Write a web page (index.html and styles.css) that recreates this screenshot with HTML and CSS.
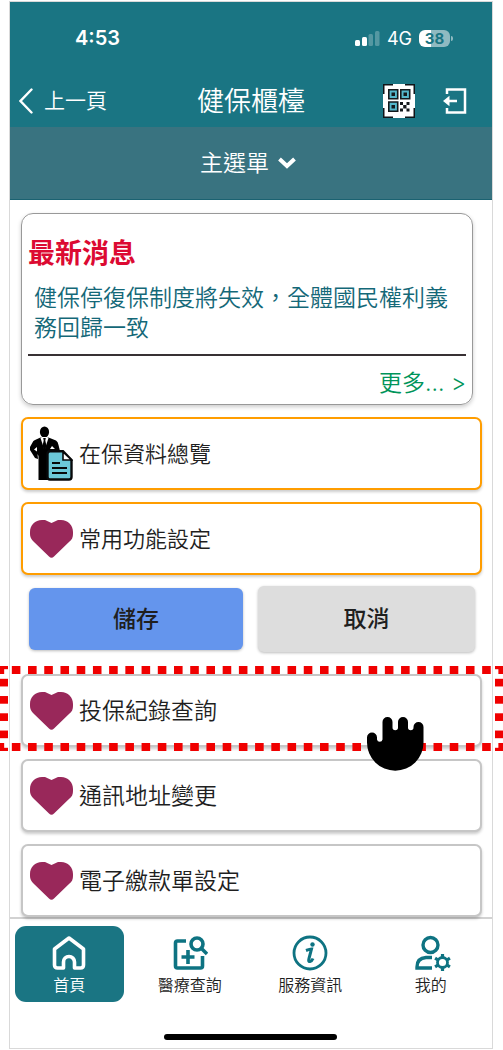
FILE: index.html
```html
<!DOCTYPE html>
<html lang="zh-Hant">
<head>
<meta charset="utf-8">
<meta name="viewport" content="width=device-width, initial-scale=1">
<title>健保櫃檯</title>
<link rel="stylesheet" href="styles.css">
</head>
<body>
<svg class="defs" aria-hidden="true">
  <symbol id="heart" viewBox="0 0 43 38">
    <path d="M12 0H15L21.500 3L28 0H31C38 0 43 5 43 12V14C43 17 42 20 39 22L24 36.500Q21.500 39 19 36.500L4 22C1 19 0 17 0 14V12C0 5 5 0 12 0Z" fill="#99285a"/>
  </symbol>
</svg>
<div class="phone">
  <div class="top">
    <div class="status">
      <span class="time">4:53</span>
      <span class="signals">
        <svg width="25" height="17" viewBox="0 0 25 17" fill="#fff" aria-hidden="true">
          <rect x="0" y="10" width="5" height="6" rx="1.500"/><rect x="7" y="7" width="5" height="9" rx="1.500"/>
          <g opacity=".25"><rect x="13.500" y="4" width="4.500" height="12" rx="1.500"/><rect x="20" y="1" width="4.500" height="15" rx="1.500"/></g>
        </svg>
        <span class="network">4G</span>
        <span class="battery">38</span>
      </span>
    </div>
    <header class="header">
      <a class="back" href="#">
        <svg width="14" height="26" viewBox="0 0 14 26" fill="none" stroke="#fff" stroke-width="2.400" stroke-linecap="round" aria-hidden="true"><path d="M12.500 1.500L1.500 13L12.500 24.500"/></svg>
        <span class="label">上一頁</span>
      </a>
      <h1 class="title">健保櫃檯</h1>
      <div class="actions">
        <button class="icon-button" type="button" aria-label="QR Code">
          <svg width="32" height="34" viewBox="0 0 32 34" aria-hidden="true">
            <path d="M0 0H32V34H0Z" fill="#fff"/>
            <path d="M.75 10V.75H10M22 .75H31.250V10M31.250 24V33.250H22M10 33.250H.75V24" fill="none" stroke="#101418" stroke-width="1.500"/>
            <g fill="#55b8cc" stroke="#14191c" stroke-width="1.600"><path d="M5.800 5.800H14.700V14.700H5.800ZM17.800 5.800H26.700V14.700H17.800ZM5.800 18H14.700V27.200H5.800Z"/></g>
            <path d="M8.500 8.500H12V12H8.500ZM20.500 8.500H24V12H20.500ZM8.500 21H12V24.500H8.500ZM17 18H20V21H17ZM23.500 18H26.500V21H23.500ZM20.200 21H23.500V24.500H20.200ZM17 24.500H20V27.500H17ZM23.500 24.500H26.500V27.500H23.500Z" fill="#14191c"/>
          </svg>
        </button>
        <button class="icon-button" type="button" aria-label="登出">
          <svg width="24" height="26" viewBox="0 0 24 26" aria-hidden="true"><path d="M4 6V1.500H22V24.500H4V20M14 13H4" fill="none" stroke="#fff" stroke-width="2.500"/><path d="M0 13L6.500 7.800V18.200Z" fill="#fff"/></svg>
        </button>
      </div>
    </header>
  </div>
  <button class="menu" type="button">
    <span class="label">主選單</span>
    <svg width="18" height="12" viewBox="0 0 18 12" fill="none" stroke="#fff" stroke-width="4" aria-hidden="true"><path d="M1.500 2L9 9L16.500 2"/></svg>
  </button>
  <main class="content">
    <section class="news">
      <h2 class="news-title">最新消息</h2>
      <a class="news-item" href="#">健保停復保制度將失效，全體國民權利義務回歸一致</a>
      <a class="more" href="#">更多... &gt;</a>
    </section>
    <button class="tile tile-main" type="button">
      <svg width="43" height="56" viewBox="0 0 43 56" aria-hidden="true">
        <ellipse cx="14.500" cy="6" rx="4.600" ry="5.600"/>
        <path d="M10.500 11.500L18.500 11.500L26 14.500Q28 15.500 28.500 19L30 25H19V54H8.500V30L7.500 28L8 33L5 32L0 24V21L2.500 16.500Q3 14.500 5 14Z"/>
        <path d="M10.500 12L14.500 24L18.500 12L17 11H12Z" fill="#fff"/>
        <path d="M13.200 12H15.800L15.300 14.500L16.500 20L14.500 25L12.500 20L13.700 14.500Z"/>
        <path d="M4 23.500L7 21V25.500ZM22 20L25 23H20Z" fill="#fff"/>
        <path d="M20 25.200H33L41.500 34V51Q41.500 53.500 39 53.500H20Q17.500 53.500 17.500 51V28Q17.500 25.200 20 25.200Z" fill="#6cc9d9" stroke="#08090a" stroke-width="2.400"/>
        <path d="M33 26V34H41.500Z" fill="#fff" stroke="#08090a" stroke-width="1.600"/>
        <path d="M22 37H30M22 42H37M22 47H37" stroke="#08090a" stroke-width="1.800"/>
      </svg>
      <span class="label">在保資料總覽</span>
    </button>
    <button class="tile tile-main" type="button">
      <svg class="heart" aria-hidden="true"><use href="#heart"/></svg>
      <span class="label">常用功能設定</span>
    </button>
    <div class="form-actions">
      <button class="action save" type="button"><span class="label">儲存</span></button>
      <button class="action cancel" type="button"><span class="label">取消</span></button>
    </div>
    <div class="highlighted">
      <button class="tile" type="button">
        <svg class="heart" aria-hidden="true"><use href="#heart"/></svg>
        <span class="label">投保紀錄查詢</span>
      </button>
      <div class="marker"></div>
      <svg class="hand" width="57" height="54" viewBox="0 0 57 54" aria-hidden="true"><path d="M0 20.500A5 5 0 0 1 10 20.500V22.500A2.800 2.800 0 0 0 15.500 22.500V5A5 5 0 0 1 25.500 5V10.500A2.700 2.700 0 0 0 31 10.500V5A5 5 0 0 1 41 5V10.500A2.700 2.700 0 0 0 46.500 10.500V10A5 5 0 0 1 56.500 10V25.500A28.250 28.250 0 0 1 0 25.500Z"/></svg>
    </div>
    <button class="tile" type="button">
      <svg class="heart" aria-hidden="true"><use href="#heart"/></svg>
      <span class="label">通訊地址變更</span>
    </button>
    <button class="tile" type="button">
      <svg class="heart" aria-hidden="true"><use href="#heart"/></svg>
      <span class="label">電子繳款單設定</span>
    </button>
  </main>
  <footer class="footer">
    <nav class="tabs">
      <a class="tab active" href="#" aria-current="page">
        <svg width="36" height="36" viewBox="0 0 36 36" fill="none" stroke="#fff" stroke-width="3.600" stroke-linejoin="round" aria-hidden="true"><path d="M3.500 14L18 3L32.500 14V30Q32.500 33 29.500 33H23.500V27A5.500 5.500 0 0 0 12.500 27V33H6.500Q3.500 33 3.500 30Z"/></svg>
        <span>首頁</span>
      </a>
      <a class="tab" href="#">
        <svg width="36" height="36" viewBox="0 0 36 36" fill="none" stroke="#0e7382" stroke-width="3.600" aria-hidden="true"><path d="M14 6H5.500Q3.500 6 3.500 8V31Q3.500 33 5.500 33H28.500Q30.500 33 30.500 31V21M16 15V29M9.500 22H22.500"/><circle cx="25" cy="9" r="6"/><path d="M29 13L35 19"/></svg>
        <span>醫療查詢</span>
      </a>
      <a class="tab" href="#">
        <svg width="36" height="36" viewBox="0 0 36 36" fill="none" stroke="#0e7382" aria-hidden="true"><circle cx="18" cy="18" r="16" stroke-width="2.800"/><circle cx="20.500" cy="9.500" r="2.200" fill="#0e7382" stroke="none"/><path d="M14 15.500Q18 14 19.500 14L17 23.500Q16 27 18 26.500Q20 26 21 23.500" stroke-width="3"/></svg>
        <span>服務資訊</span>
      </a>
      <a class="tab" href="#">
        <svg width="40" height="36" viewBox="-4 0 40 36" fill="none" stroke="#0e7382" stroke-width="3.400" aria-hidden="true"><circle cx="15.500" cy="10" r="7.500"/><path d="M17 22.500H11Q2 23 2 32V33H17"/><circle cx="27.500" cy="27.500" r="5" stroke-width="2.800"/><path d="M27.500 19V22M27.500 33V36M20.100 23.200L23 25M32 30L34.900 31.800M20.100 31.800L23 30M32 25L34.900 23.200" stroke-width="3.200"/></svg>
        <span>我的</span>
      </a>
    </nav>
    <div class="home-indicator"></div>
  </footer>
</div>
</body>
</html>
```
FILE: styles.css
```css
* {
  box-sizing: border-box;
}

body {
  margin: 0;
  background: #fff;
  color: #1f1f1f;
  font-family: "Noto Sans CJK TC", sans-serif;
  font-weight: 350;
}

button {
  margin: 0;
  padding: 0;
  border: 0;
  background: none;
  color: inherit;
  font: inherit;
  cursor: pointer;
}

a {
  color: inherit;
  text-decoration: none;
}

svg {
  display: block;
  flex: none;
}

.defs {
  position: absolute;
  width: 0;
  height: 0;
}

.label {
  display: block;
  padding-bottom: 4px;
}

.phone {
  margin: 1px 10px 0 9px;
  border: 1px solid #d9d9d9;
}

.top {
  background: #1a7583;
  color: #fff;
}

.status {
  display: flex;
  align-items: center;
  justify-content: space-between;
  height: 72px;
  padding: 0 42px 0 65px;
  font-family: Inter, sans-serif;
}

.time {
  font-size: 20px;
  font-weight: 600;
}

.signals {
  display: flex;
  align-items: center;
  gap: 7px;
}

.network {
  font-size: 18px;
  font-weight: 400;
}

.battery {
  position: relative;
  width: 31px;
  border-radius: 6px;
  background: linear-gradient(90deg, #fff 12px, #8fbac1 12px);
  color: #1a7583;
  font-size: 15px;
  font-weight: 700;
  line-height: 17px;
  text-align: center;
}

.battery::after {
  content: "";
  position: absolute;
  left: 100%;
  top: 6px;
  width: 2px;
  height: 5px;
  margin-left: 1px;
  border-radius: 0 2px 2px 0;
  background: #8fbac1;
}

.header {
  display: grid;
  grid-template-columns: 1fr auto 1fr;
  align-items: center;
  height: 53px;
  padding: 0 25px 0 9px;
}

.back {
  display: flex;
  align-items: center;
  gap: 11px;
  font-size: 21px;
}

.title {
  margin: 0;
  padding: 0 0 2px 16px;
  font-size: 27px;
  font-weight: 350;
  line-height: 40px;
}

.actions {
  display: flex;
  align-items: center;
  justify-content: flex-end;
  gap: 28px;
}

.menu {
  display: flex;
  align-items: center;
  justify-content: center;
  gap: 9px;
  width: 100%;
  height: 73px;
  padding-right: 6px;
  border-bottom: 1px solid #1b6271;
  background: #397380;
  color: #fff;
  font-size: 23px;
}

.content {
  display: flex;
  flex-direction: column;
  gap: 12px;
  padding: 13px 10px 0 11px;
}

.news {
  display: flex;
  flex-direction: column;
  margin-right: 9px;
  padding: 18px 6px 3px;
  border: 1px solid #999;
  border-radius: 12px;
  box-shadow: 0 2px 4px #0003;
}

.news-title {
  margin: 0;
  color: #dc0a32;
  font-size: 27px;
  font-weight: 700;
  line-height: 40px;
}

.news-item {
  padding: 9px 6px 13px;
  border-bottom: 2px solid #383134;
  color: #146878;
  font-size: 23px;
  line-height: 30px;
}

.more {
  align-self: flex-end;
  padding-top: 9px;
  color: #00945a;
  font-family: Inter, "Noto Sans CJK TC", sans-serif;
  font-size: 23px;
  line-height: 36px;
}

.tile {
  display: flex;
  align-items: center;
  gap: 6px;
  width: 100%;
  height: 73px;
  padding: 0 7px;
  border: 2px solid #c6c6c6;
  border-radius: 7px;
  background: #fff;
  box-shadow: 0 2px 3px #0003;
  font-size: 23px;
}

.tile-main {
  border-color: #ff9d00;
  font-size: 22px;
}

.heart {
  width: 43px;
  height: 38px;
}

.form-actions {
  display: grid;
  grid-template-columns: 214fr 217fr;
  align-items: center;
  gap: 15px;
  margin: -1px 7px 10px 8px;
}

.action {
  height: 66px;
  border-radius: 6px;
  background: #ddd;
  box-shadow: 0 1px 3px #0004;
  font-size: 23px;
  font-weight: 500;
}

.save {
  height: 62px;
  background: #6495ed;
}

.highlighted {
  position: relative;
}

.marker {
  --dot: transparent calc(50% - 4px), #f00000 0, #f00000 calc(50% + 4px), transparent 0;
  position: absolute;
  inset: -8px -21px -4px;
  padding: 8px;
  background:
    linear-gradient(90deg, var(--dot)) 0 -8px / 16px 8px round no-repeat,
    linear-gradient(90deg, var(--dot)) 0 calc(100% + 8px) / 16px 8px round no-repeat,
    linear-gradient(var(--dot)) -8px 0 / 8px 17px no-repeat round,
    linear-gradient(var(--dot)) calc(100% + 8px) 0 / 8px 17px no-repeat round;
  background-origin: content-box;
  background-clip: border-box;
  pointer-events: none;
}

.hand {
  position: absolute;
  right: 58px;
  top: 43px;
}

.footer {
  padding: 7px 7px 8px 5px;
  border-top: 2px solid #d2d2d2;
  background: #fff;
}

.tabs {
  display: grid;
  grid-template-columns: repeat(4, 1fr);
  gap: 12px;
}

.tab {
  display: flex;
  flex-direction: column;
  align-items: center;
  gap: 1px;
  height: 76px;
  padding-top: 9px;
  border-radius: 11px;
  font-size: 16px;
  line-height: 24px;
}

.active {
  background: #1a7583;
  color: #fff;
}

.home-indicator {
  width: 173px;
  height: 6px;
  margin: 32px auto 0;
  border-radius: 3px;
  background: #000;
}
```
